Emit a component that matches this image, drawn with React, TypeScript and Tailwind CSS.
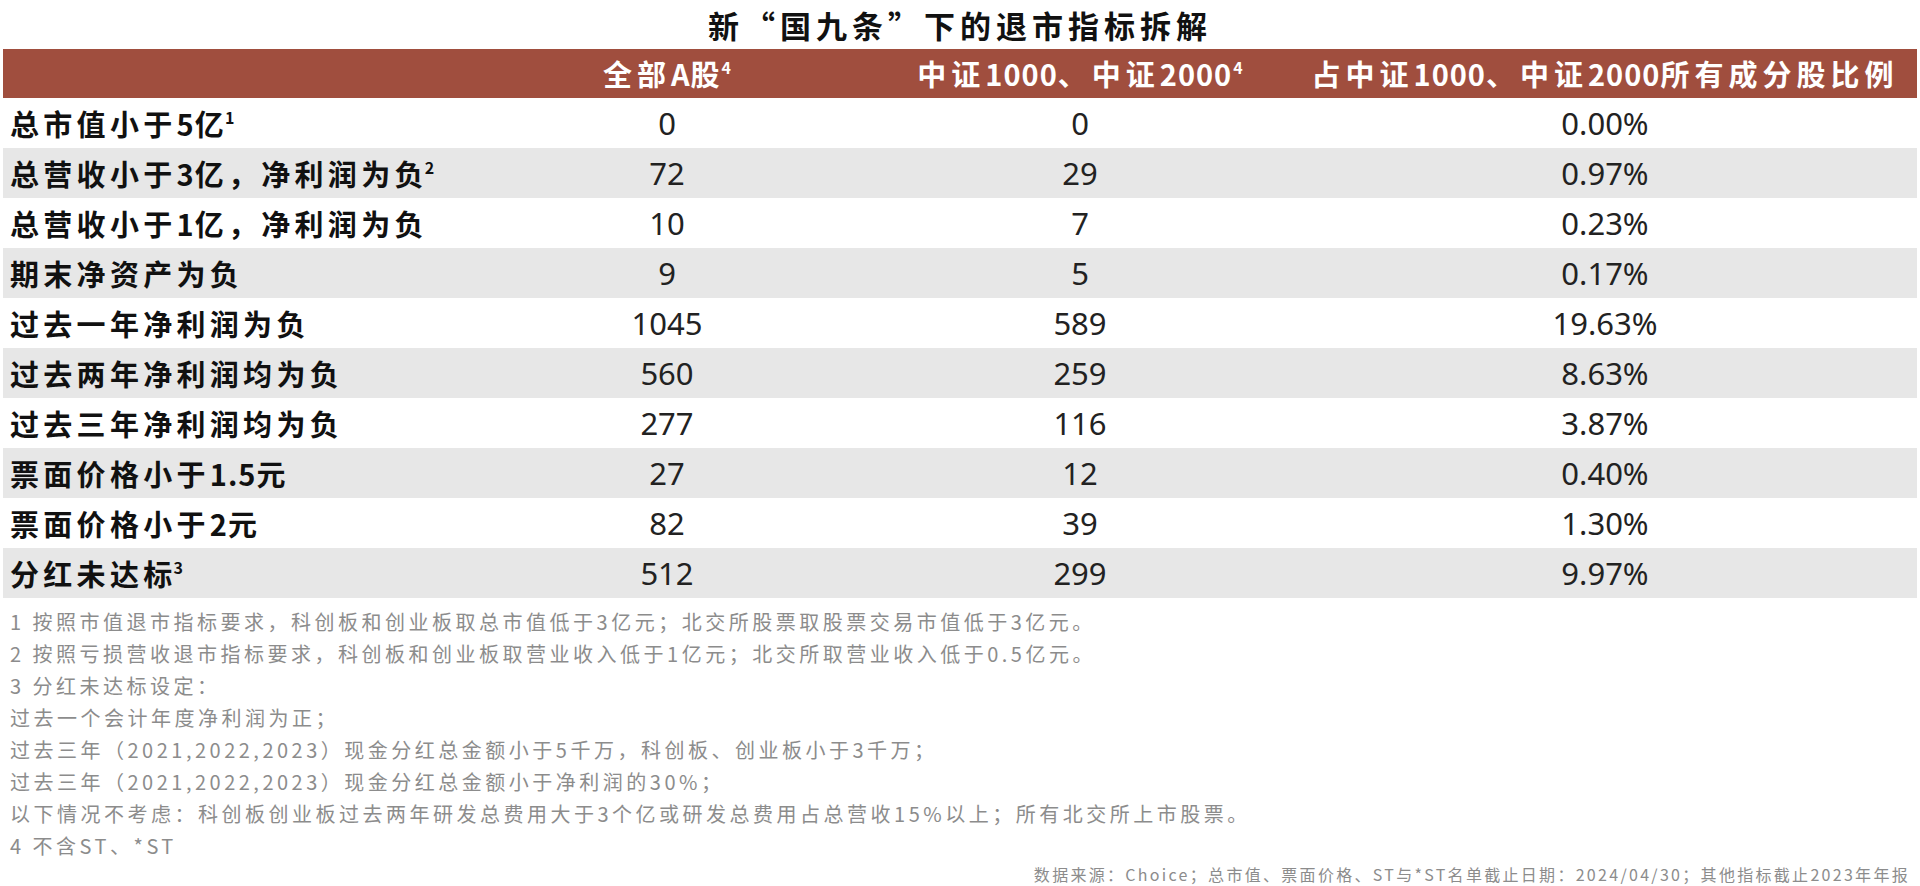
import React from "react";

interface Row {
  label: string;
  sup?: string;
  all: string;
  csi: string;
  ratio: string;
}

const rows: Row[] = [
  { label: "总市值小于5亿", sup: "1", all: "0", csi: "0", ratio: "0.00%" },
  { label: "总营收小于3亿，净利润为负", sup: "2", all: "72", csi: "29", ratio: "0.97%" },
  { label: "总营收小于1亿，净利润为负", all: "10", csi: "7", ratio: "0.23%" },
  { label: "期末净资产为负", all: "9", csi: "5", ratio: "0.17%" },
  { label: "过去一年净利润为负", all: "1045", csi: "589", ratio: "19.63%" },
  { label: "过去两年净利润均为负", all: "560", csi: "259", ratio: "8.63%" },
  { label: "过去三年净利润均为负", all: "277", csi: "116", ratio: "3.87%" },
  { label: "票面价格小于1.5元", all: "27", csi: "12", ratio: "0.40%" },
  { label: "票面价格小于2元", all: "82", csi: "39", ratio: "1.30%" },
  { label: "分红未达标", sup: "3", all: "512", csi: "299", ratio: "9.97%" },
];

const notes = [
  "1 按照市值退市指标要求，科创板和创业板取总市值低于3亿元；北交所股票取股票交易市值低于3亿元。",
  "2 按照亏损营收退市指标要求，科创板和创业板取营业收入低于1亿元；北交所取营业收入低于0.5亿元。",
  "3 分红未达标设定：",
  "过去一个会计年度净利润为正；",
  "过去三年（2021,2022,2023）现金分红总金额小于5千万，科创板、创业板小于3千万；",
  "过去三年（2021,2022,2023）现金分红总金额小于净利润的30%；",
  "以下情况不考虑：科创板创业板过去两年研发总费用大于3个亿或研发总费用占总营收15%以上；所有北交所上市股票。",
  "4 不含ST、*ST",
];

const cjk = "font-['Noto_Sans_CJK_SC','Noto_Sans',sans-serif]";
const num = "font-['Noto_Sans','Noto_Sans_CJK_SC',sans-serif]";
const grid = "grid grid-cols-[464px_400px_426px_1fr]";

// latin/digit runs sit tighter than the wide-spaced CJK glyphs
function Mixed({ text }: { text: string }) {
  const parts = text.split(/([0-9A-Za-z.%*]+)/);
  return (
    <>
      {parts.map((p, i) =>
        p ? (
          <span key={i} className={i % 2 ? "tracking-[1px]" : ""}>
            {p}
          </span>
        ) : null
      )}
    </>
  );
}

function Sup({ children, tight }: { children: React.ReactNode; tight?: boolean }) {
  return (
    <sup className={`${tight ? "-ml-[3px]" : "ml-[1px]"} text-[16px] -top-[12px] tracking-normal`}>
      {children}
    </sup>
  );
}

export default function App() {
  return (
    <div className={`w-[1920px] h-[886px] bg-white overflow-hidden ${cjk}`}>
      <h1 className="h-[49px] flex items-center justify-center text-[31px] font-bold tracking-[5px] text-[#111] leading-none">
        新“国九条”下的退市指标拆解
      </h1>

      <div className="mx-[3px]">
        <div className={`${grid} h-[49px] items-center bg-[#a04e3e] text-white text-[29px] font-bold tracking-[5px] leading-none`}>
          <div />
          <div className="text-center">
            <Mixed text="全部A股" />
            <Sup tight>4</Sup>
          </div>
          <div className="text-center">
            <Mixed text="中证1000、中证2000" />
            <Sup>4</Sup>
          </div>
          <div className="text-center">
            <Mixed text="占中证1000、中证2000所有成分股比例" />
          </div>
        </div>

        {rows.map((r, i) => (
          <div
            key={r.label}
            className={`${grid} h-[50px] items-center ${i % 2 === 1 ? "bg-[#e7e7e7]" : "bg-white"}`}
          >
            <div className="pl-[7px] text-[29px] font-bold tracking-[4.3px] text-[#111] leading-none">
              <Mixed text={r.label} />
              {r.sup && <Sup tight>{r.sup}</Sup>}
            </div>
            <div className={`text-center text-[31px] text-[#222] leading-none ${num}`}>{r.all}</div>
            <div className={`text-center text-[31px] text-[#222] leading-none ${num}`}>{r.csi}</div>
            <div className={`text-center text-[31px] text-[#222] leading-none ${num}`}>{r.ratio}</div>
          </div>
        ))}
      </div>

      <div className="mt-[8px] pl-[10px] text-[20px] tracking-[3.5px] leading-[32px] text-[#8c8c8c]">
        {notes.map((n) => (
          <div key={n} className="whitespace-pre">
            {n}
          </div>
        ))}
      </div>

      <div className="pr-[10px] text-right text-[16px] tracking-[2.3px] leading-[24px] text-[#8c8c8c]">
        数据来源：Choice；总市值、票面价格、ST与*ST名单截止日期：2024/04/30；其他指标截止2023年年报
      </div>
    </div>
  );
}
